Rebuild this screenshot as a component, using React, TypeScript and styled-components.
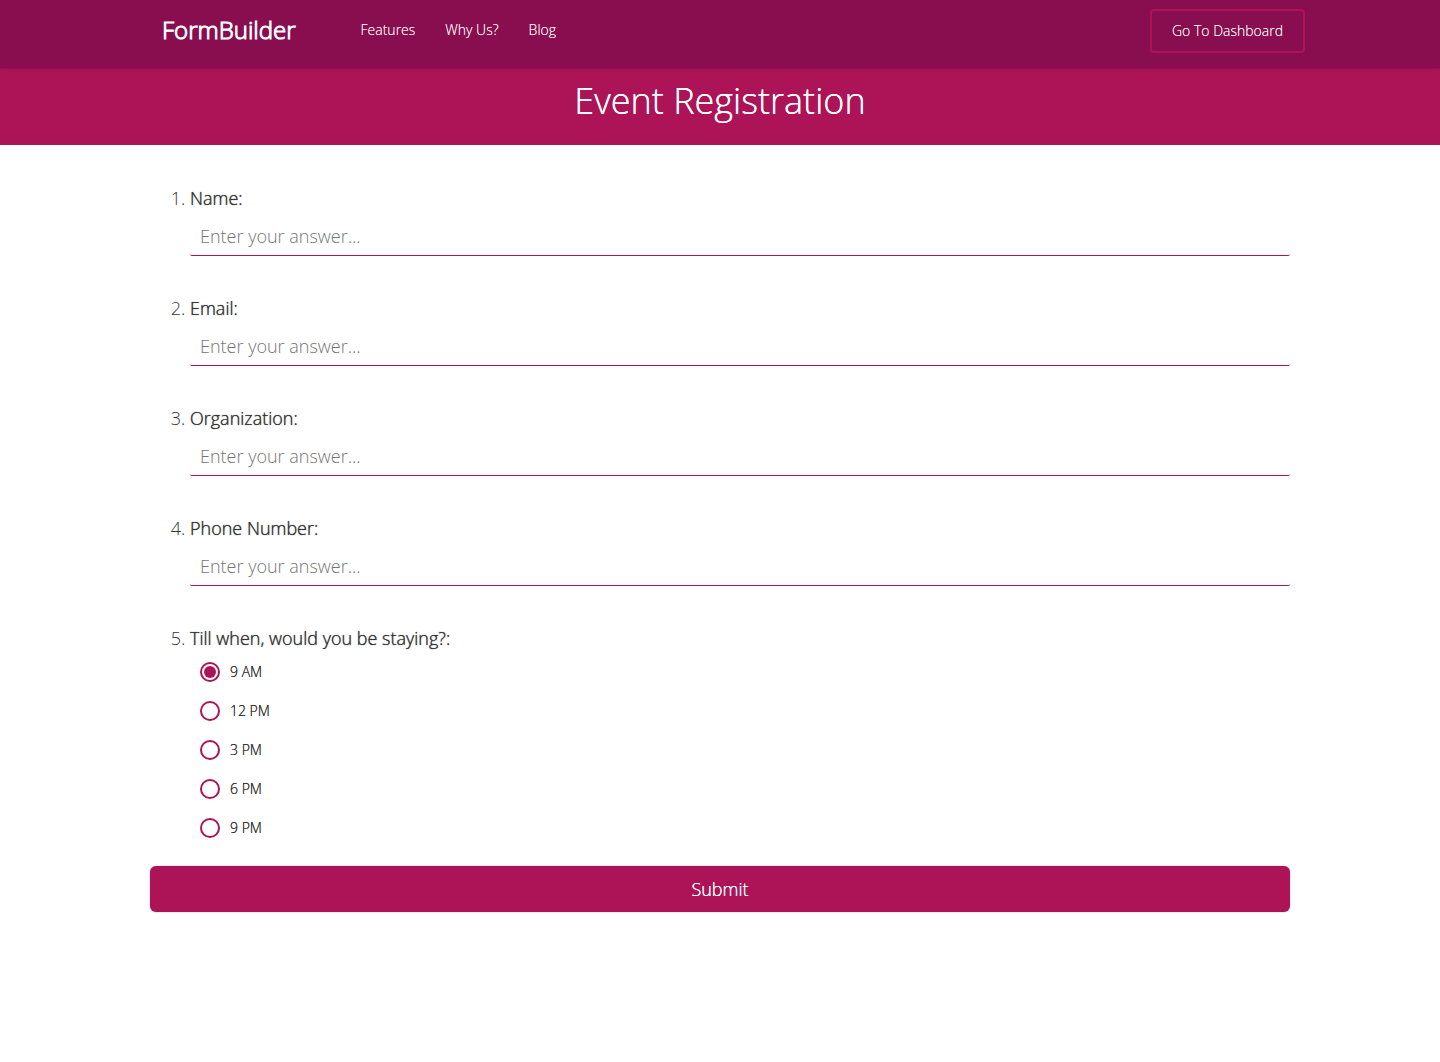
import React, { useState } from "react";
import styled, { createGlobalStyle } from "styled-components";

const wine = "#880e4f";
const pink = "#ad1457";
const ink = "#333";

const GlobalStyle = createGlobalStyle`
  *, *::before, *::after { box-sizing: border-box; }
  body {
    margin: 0;
    background: #fff;
    color: ${ink};
    font-family: "Open Sans", "Noto Sans", sans-serif;
    font-size: 18px;
    font-weight: 300;
  }
`;

const NavBar = styled.header`
  position: relative;
  background: ${wine};
  box-shadow: 0 1px 3px rgba(0, 0, 0, 0.2);
`;

const NavInner = styled.div`
  display: flex;
  align-items: flex-start;
  max-width: 1170px;
  height: 68px;
  margin: 0 auto;
  padding: 9px 0 0 27px;
`;

const Logo = styled.a`
  color: #fff;
  font-size: 24px;
  line-height: 42px;
  text-decoration: none;
  -webkit-text-stroke: 1px #fff;
`;

const NavLinks = styled.nav`
  display: flex;
  gap: 30px;
  margin-left: 65px;
`;

const NavLink = styled.a`
  color: #fff;
  font-size: 14px;
  line-height: 42px;
  text-decoration: none;
  text-shadow: 0 0 0 rgba(255, 255, 255, 0.5);
`;

const DashboardButton = styled.button`
  height: 44px;
  margin-left: auto;
  padding: 0 20px 2px;
  border: 2px solid ${pink};
  border-radius: 4px;
  background: transparent;
  color: #fff;
  font: inherit;
  font-size: 14px;
  text-shadow: 0 0 0 rgba(255, 255, 255, 0.5);
  cursor: pointer;
`;

const Banner = styled.div`
  padding: 8px 20px 19px;
  background: ${pink};
`;

const Title = styled.h1`
  margin: 0;
  color: #fff;
  font-size: 36px;
  font-weight: 300;
  line-height: 50px;
  text-align: center;
  text-shadow: 0 0 0 #fff;
`;

const Form = styled.form`
  max-width: 1140px;
  margin: 0 auto;
  padding: 38px 0;
`;

const Questions = styled.ol`
  display: flex;
  flex-direction: column;
  gap: 37px;
  margin: 0;
  padding: 0 0 0 40px;
`;

const Question = styled.li`
  line-height: 30px;
`;

const QuestionLabel = styled.label`
  display: block;
  text-shadow: 0 0 1px ${ink};
`;

const Prompt = styled.div`
  text-shadow: 0 0 1px ${ink};
`;

const Answer = styled.input`
  display: block;
  width: 100%;
  height: 39px;
  margin-top: 4px;
  padding: 0 10px 1px;
  border: 0;
  border-bottom: 1px solid ${pink};
  border-radius: 2px;
  outline: 0;
  background: transparent;
  color: ${ink};
  font: inherit;
  &::placeholder { color: #757575; opacity: 1; }
`;

const ChoiceList = styled.div`
  display: flex;
  flex-direction: column;
  align-items: flex-start;
  gap: 19px;
  padding: 9px 10px 0;
`;

const Choice = styled.label`
  display: flex;
  align-items: center;
  gap: 10px;
  font-size: 14px;
  line-height: 20px;
  text-shadow: 0 0 0 ${ink};
`;

const Radio = styled.input`
  appearance: none;
  width: 20px;
  height: 20px;
  margin: 0;
  border: 2px solid ${pink};
  border-radius: 50%;
  background: #fff;
  &:checked {
    padding: 2px;
    background: ${pink} content-box;
  }
`;

const Submit = styled.button`
  display: block;
  width: 100%;
  height: 46px;
  margin-top: 28px;
  border: 0;
  border-radius: 6px;
  background: ${pink};
  box-shadow: 0 0 2px rgba(0, 0, 0, 0.3);
  color: #fff;
  font: inherit;
  text-shadow: 0 0 0 #fff;
  cursor: pointer;
`;

const textFields = ["Name", "Email", "Organization", "Phone Number"];
const times = ["9 AM", "12 PM", "3 PM", "6 PM", "9 PM"];

export default function App() {
  const [stay, setStay] = useState(times[0]);

  return (
    <>
      <GlobalStyle />
      <NavBar>
        <NavInner>
          <Logo href="#">FormBuilder</Logo>
          <NavLinks>
            <NavLink href="#features">Features</NavLink>
            <NavLink href="#why-us">Why Us?</NavLink>
            <NavLink href="#blog">Blog</NavLink>
          </NavLinks>
          <DashboardButton type="button">Go To Dashboard</DashboardButton>
        </NavInner>
      </NavBar>
      <Banner>
        <Title>Event Registration</Title>
      </Banner>
      <Form onSubmit={(event) => event.preventDefault()}>
        <Questions>
          {textFields.map((field, index) => (
            <Question key={field}>
              <QuestionLabel htmlFor={`answer-${index}`}>{field}:</QuestionLabel>
              <Answer id={`answer-${index}`} type="text" placeholder="Enter your answer..." />
            </Question>
          ))}
          <Question>
            <Prompt id="stay-prompt">Till when, would you be staying?:</Prompt>
            <ChoiceList role="radiogroup" aria-labelledby="stay-prompt">
              {times.map((time) => (
                <Choice key={time}>
                  <Radio
                    type="radio"
                    name="stay"
                    value={time}
                    checked={stay === time}
                    onChange={() => setStay(time)}
                  />
                  {time}
                </Choice>
              ))}
            </ChoiceList>
          </Question>
        </Questions>
        <Submit type="submit">Submit</Submit>
      </Form>
    </>
  );
}
